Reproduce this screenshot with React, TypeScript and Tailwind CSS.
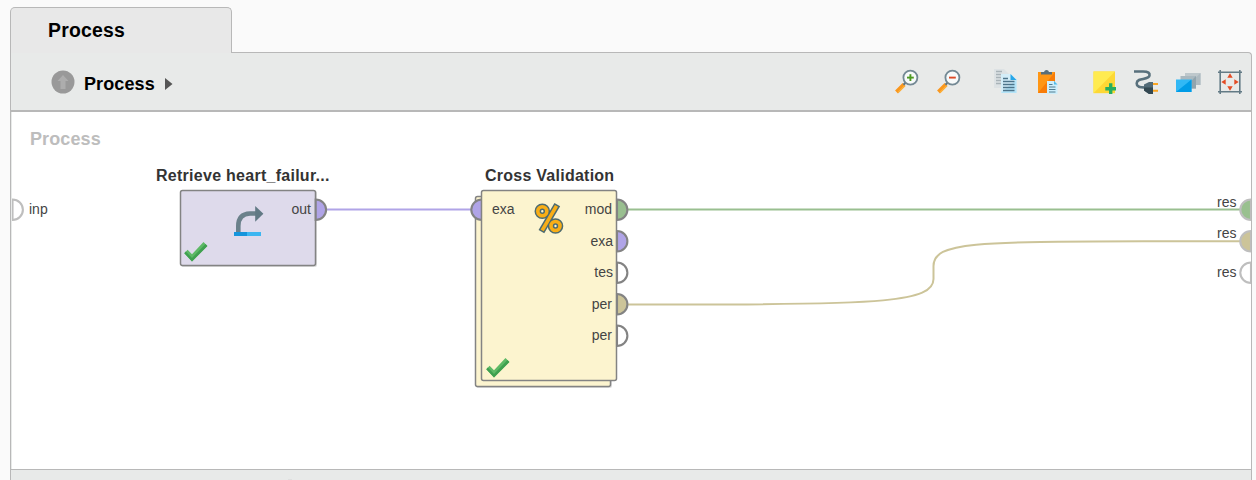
import React from "react";

const GRAY = "#838383";

function ZoomIcon({ plus }: { plus?: boolean }) {
  return (
    <svg className="-translate-y-px" width="24" height="25" viewBox="0 0 24 25">
      <path d="M1.5 23 L9 15.5" stroke="#f9971e" strokeWidth="4" />
      <path d="M3 23.5 L10 16.5" stroke="#fdb13c" strokeWidth="1.2" />
      <path d="M8.5 15.8 L11 13.3" stroke="#607580" strokeWidth="2.2" />
      <circle cx="15.4" cy="8.6" r="7" fill="#f7fafa" stroke="#738994" strokeWidth="1.8" />
      <path d="M12 8.6 H18.8" stroke={plus ? "#4d9a22" : "#dd4a26"} strokeWidth="1.9" />
      {plus && <path d="M15.4 5.2 V12" stroke="#4d9a22" strokeWidth="1.9" />}
    </svg>
  );
}

function CopyIcon() {
  return (
    <svg className="-translate-y-px" width="24" height="25" viewBox="0 0 24 25">
      <path d="M0 0 H10 L15 5 V19 H0Z" fill="#dde2e4" />
      <path d="M2 2.5H8M2 5.5H7M2 8.5H7M2 11.5H7M2 14.5H7" stroke="#a9b3b8" strokeWidth="1.4" />
      <path d="M7 5 H17 L22.5 10.5 V24 H7Z" fill="#d3edf8" />
      <path d="M22.5 10.5 V24 H7Z" fill="#b4e4f8" />
      <path d="M16.5 5 L22.5 11 H16.5Z" fill="#26a6e8" />
      <path d="M9 9.5H14M9 12.5H20.5M9 15.5H20.5M9 18.5H20.5M9 21.5H20.5" stroke="#4d748a" strokeWidth="1.3" />
    </svg>
  );
}

function PasteIcon() {
  return (
    <svg width="22" height="25" viewBox="0 0 22 25">
      <path d="M1 2 H18 V23 H1Z" fill="#ff9614" />
      <path d="M18 2 V23 H1Z" fill="#f87c08" />
      <path d="M4 4.5 V2 H7 Q7.5 0 9.5 0 Q11.5 0 12 2 H15 V4.5Z" fill="#596e79" />
      <path d="M10 11 H17 L20.5 14.5 V24 H10Z" fill="#cdeefb" />
      <path d="M17 11 L20.5 14.5 H17Z" fill="#51bce9" />
      <path d="M12 14.5H15.5M12 17H18.5M12 19.5H18.5M12 22H18.5" stroke="#517c90" />
    </svg>
  );
}

function NoteIcon() {
  return (
    <svg width="24" height="25" viewBox="0 0 24 25">
      <path d="M.5 1.5 H22 V23.2 H.5Z" fill="#fdd835" />
      <path d="M.5 1.5 H22 L.5 23.2Z" fill="#ffeb50" />
      <path d="M12.3 18.7 H23M17.7 13.3 V24" stroke="#26ae60" strokeWidth="3.4" />
    </svg>
  );
}

function PlugIcon() {
  return (
    <svg width="25" height="25" viewBox="0 0 25 25">
      <path d="M0 1.5 H9 C14.5 1.5 16 3 15.5 5.5 C15 9 8.5 8.5 5 10 C2 11.5 2 15 4.5 16.5 C6.5 17.5 9 17.5 12 17.5" fill="none" stroke="#58707c" strokeWidth="2.6" />
      <path d="M10 14.5 L15 12 H19 V24 H15 L10 20.5Z" fill="#536b77" />
      <path d="M10 17.5 H19 V24 H15 L10 20.5Z" fill="#334851" />
      <path d="M19 14 H24M19 20.8 H24" stroke="#fba622" strokeWidth="2.1" />
    </svg>
  );
}

function LayersIcon() {
  return (
    <svg width="25" height="24" viewBox="0 0 25 24">
      <path d="M9 3 H24.5 V15 H9Z" fill="#bec8cc" />
      <path d="M24.5 3 V15 H12Z" fill="#aebbc1" />
      <path d="M4.5 6 H20 V18.5 H4.5Z" fill="#aab9c0" />
      <path d="M20 6 V18.5 H8Z" fill="#91a4ad" />
      <path d="M0 9.5 H15.5 V22 H0Z" fill="#31b8f5" />
      <path d="M15.5 9.5 V22 H0Z" fill="#009ce7" />
    </svg>
  );
}

function FitIcon() {
  return (
    <svg width="24" height="24" viewBox="0 0 24 24">
      <path d="M2.2 0 V24M21.8 0 V24M0 2.2 H24M0 21.8 H24" stroke="#637b86" strokeWidth="1.6" />
      <path d="M12 3.3 L14.7 7.7 H9.3ZM12 20.7 L14.7 16.3 H9.3ZM3.3 12 L7.7 9.3 V14.7ZM20.7 12 L16.3 9.3 V14.7Z" fill="#e34b24" />
    </svg>
  );
}

function Check({ className }: { className: string }) {
  return (
    <svg className={className} width="24" height="21" viewBox="0 0 24 21">
      <path d="M.3 12.2 L3.6 8.7 L8 13.2 L19.5 1 L23.4 5 L8 20.5Z" fill="#5db966" />
      <path d="M.3 12.2 L1.8 10.5 L8 17 L21.5 3 L23.4 5 L8 20.5Z" fill="#3fa050" />
    </svg>
  );
}

type PortProps = { x: number; y: number; fill?: string; left?: boolean; stroke?: string };

function Port({ x, y, fill = "#fff", left, stroke = GRAY }: PortProps) {
  const d = left
    ? `M${x} ${y - 10} A10.7 10.25 0 0 0 ${x} ${y + 10.5}Z`
    : `M${x} ${y - 10} A10.4 10.25 0 0 1 ${x} ${y + 10.5}Z`;
  return <path d={d} fill={fill} stroke={stroke} strokeWidth="2.1" />;
}

const LABEL = "absolute whitespace-nowrap text-[14px] leading-5 text-[#444]";
const TITLE = "absolute top-[54px] whitespace-nowrap text-[16px] leading-5 font-bold text-[#333]";

export default function App() {
  return (
    <div className="flex h-[480px] w-[1256px] flex-col overflow-hidden bg-[#fafafa] pt-[7px] pl-[10px] font-['Liberation_Sans',sans-serif]">
      <div className="relative z-10 -mb-px flex h-[46px] w-[222px] shrink-0 items-center rounded-t-[5px] border border-b-0 border-[#b8b8b8] bg-[#e8e8e8] pl-[37px] font-bold text-black">
        <span className="text-[19.4px] tracking-[0.2px]">Process</span>
      </div>
      <div className="flex h-[440px] w-[1242px] shrink-0 flex-col rounded-tr border border-b-0 border-[#b8b8b8] bg-[#e8eae9]">
        <header className="flex h-[59px] shrink-0 items-center justify-between border-b-2 border-[#b8b8b8] pt-px pr-[9px] pl-[40px]">
          <div className="flex items-center">
            <svg width="24" height="24" viewBox="0 0 24 24">
              <circle cx="12" cy="12" r="11.5" fill="#999" />
              <path d="M12 5 L17.5 11 H14.5 V19 H9.5 V11 H6.5Z" fill="#adadad" />
            </svg>
            <span className="mt-[4px] ml-[9px] text-[18px] font-bold tracking-[0.1px] text-black">Process</span>
            <svg className="mt-[4px] ml-[10px]" width="8" height="12" viewBox="0 0 8 12">
              <path d="M0 0 L7.5 6 L0 12Z" fill="#555" />
            </svg>
          </div>
          <div className="flex items-center">
            <ZoomIcon plus />
            <span className="w-[18px]" />
            <ZoomIcon />
            <span className="w-[33px]" />
            <CopyIcon />
            <span className="w-[19px]" />
            <PasteIcon />
            <span className="w-[34px]" />
            <NoteIcon />
            <span className="w-[17px]" />
            <PlugIcon />
            <span className="w-[17px]" />
            <LayersIcon />
            <span className="w-[17px]" />
            <FitIcon />
          </div>
        </header>
        <main className="relative ml-px h-[357px] w-[1239px] shrink-0 overflow-hidden bg-white">
          <div className="absolute top-[17px] left-[18px] text-[18px] leading-5 font-bold tracking-[0.1px] text-[#bdbdbd]">Process</div>

          <svg className="absolute inset-0" width="1239" height="357" viewBox="12 112 1239 357">
            <path d="M326 209.5 H471" stroke="#b0a4e7" strokeWidth="2" />
            <path d="M628 209.5 H1241" stroke="#99bf90" strokeWidth="2" />
            <path d="M628 304.5 H690 C880 304.5 933.5 302 933.5 279 V266 C933.5 241 980 241.7 1160 241.3 H1241" fill="none" stroke="#ccc499" strokeWidth="2" />

            <rect x="181" y="191" width="136" height="76" rx="2" fill="#ddd" />
            <rect x="180.5" y="190.5" width="135" height="75" rx="2" fill="#dedaeb" stroke={GRAY} strokeWidth="1.5" />
            <Port x={315.7} y={209.5} fill="#b0a4e7" />

            <rect x="476" y="197" width="136" height="191" rx="2" fill="#ddd" />
            <rect x="475.5" y="196.5" width="135" height="190" rx="2" fill="#fcf4cf" stroke={GRAY} strokeWidth="1.5" />
            <Port x={482} y={209.5} fill="#b0a4e7" left />
            <rect x="481.5" y="190.5" width="135" height="190" rx="2" fill="#fcf4cf" stroke={GRAY} strokeWidth="1.5" />
            <Port x={617} y={209.5} fill="#99bf90" />
            <Port x={617} y={241} fill="#b0a4e7" />
            <Port x={617} y={272.5} />
            <Port x={617} y={304} fill="#ccc499" />
            <Port x={617} y={335.5} />

            <Port x={12.5} y={209.5} stroke="#bebebe" />
            <Port x={1251} y={209.5} fill="#99c08f" left stroke="#bebebe" />
            <Port x={1251} y={241} fill="#ccc499" left stroke="#bebebe" />
            <Port x={1251} y={272.5} left stroke="#bebebe" />

            <path d="M238.3 232 V226 Q238.3 214 250 213.5 H256" fill="none" stroke="#6b818b" strokeWidth="4.6" />
            <path d="M255.2 206 L263.4 213.7 L255.2 221.8Z" fill="#617984" />
            <path d="M234 232 H261 V236 H234Z" fill="#3cb6f1" />
            <path d="M234 232 H247 V236 H234Z" fill="#1595dc" />

            <g fill="none" stroke="#4d6b70" strokeWidth="6.6">
              <circle cx="542.3" cy="211.3" r="4.5" />
              <circle cx="555.5" cy="226" r="4.5" />
              <path d="M557.3 204.6 L541.4 231.6" />
            </g>
            <g fill="none" stroke="#f9ae16" strokeWidth="3.6">
              <circle cx="542.3" cy="211.3" r="4.5" />
              <circle cx="555.5" cy="226" r="4.5" />
              <path d="M556.5 205.9 L542.2 230.3" />
            </g>
          </svg>

          <div className={`${TITLE} left-[144px] tracking-[0.27px]`}>Retrieve heart_failur...</div>
          <div className={`${TITLE} left-[473px] tracking-[0.25px]`}>Cross Validation</div>
          <Check className="absolute top-[128.5px] left-[172px]" />
          <Check className="absolute top-[244.5px] left-[474px]" />

          <span className={`${LABEL} top-[87px] left-[17px]`}>inp</span>
          <span className={`${LABEL} top-[87px] right-[940px]`}>out</span>
          <span className={`${LABEL} top-[87px] left-[480px]`}>exa</span>
          <span className={`${LABEL} top-[87px] right-[639px]`}>mod</span>
          <span className={`${LABEL} top-[119px] right-[638px]`}>exa</span>
          <span className={`${LABEL} top-[150px] right-[638px]`}>tes</span>
          <span className={`${LABEL} top-[182px] right-[639px]`}>per</span>
          <span className={`${LABEL} top-[213px] right-[639px]`}>per</span>
          <span className={`${LABEL} top-[80px] right-[14.5px]`}>res</span>
          <span className={`${LABEL} top-[111px] right-[14.5px]`}>res</span>
          <span className={`${LABEL} top-[150px] right-[14.5px]`}>res</span>
        </main>
        <footer className="flex h-[11px] shrink-0 items-end border-t border-[#b8b8b8] pl-[277px]">
          <span className="h-px w-1 bg-[#dedfdf]" />
        </footer>
      </div>
    </div>
  );
}
